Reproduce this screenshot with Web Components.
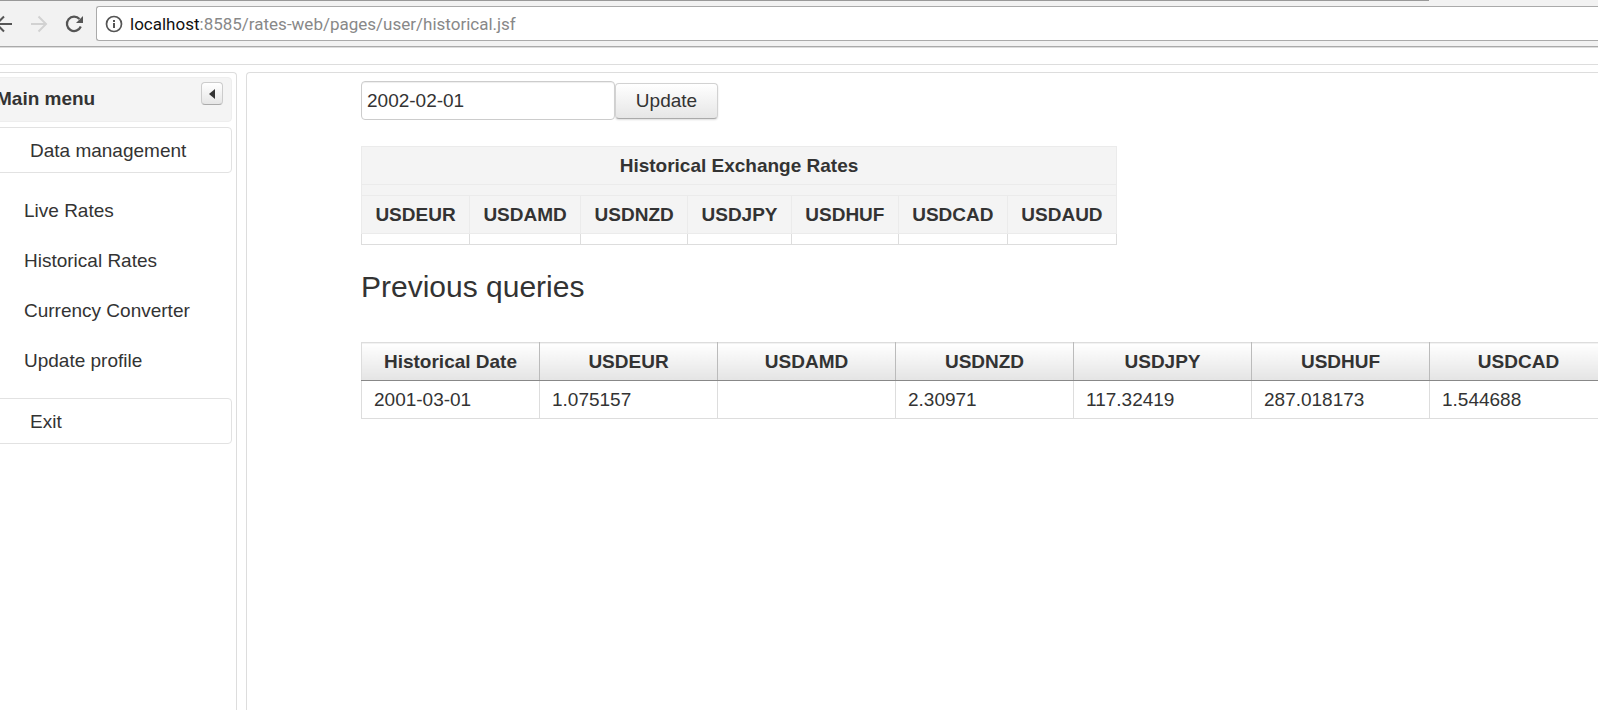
<!DOCTYPE html>
<html lang="en">
<head>
<meta charset="utf-8">
<title>Historical rates</title>
<style>
html, body { margin: 0; height: 100%; }
body { font: 19px/27px "Liberation Sans", Arial, sans-serif; color: #333; background: #fff; overflow: hidden; }
</style>
</head>
<body>
<rates-app>
  <browser-bar slot="bar" host="localhost" path=":8585/rates-web/pages/user/historical.jsf"></browser-bar>
  <side-menu slot="menu" heading="Main menu">
    <menu-group heading="Data management">
      <menu-link href="#live">Live Rates</menu-link>
      <menu-link href="#historical">Historical Rates</menu-link>
      <menu-link href="#converter">Currency Converter</menu-link>
      <menu-link href="#profile">Update profile</menu-link>
    </menu-group>
    <menu-group heading="Exit"></menu-group>
  </side-menu>
  <date-query value="2002-02-01"></date-query>
  <rates-table variant="plain" heading="Historical Exchange Rates"
    columns="USDEUR,USDAMD,USDNZD,USDJPY,USDHUF,USDCAD,USDAUD" values=",,,,,,"></rates-table>
  <section-title>Previous queries</section-title>
  <rates-table variant="wide"
    columns="Historical Date,USDEUR,USDAMD,USDNZD,USDJPY,USDHUF,USDCAD"
    values="2001-03-01,1.075157,,2.30971,117.32419,287.018173,1.544688"></rates-table>
</rates-app>
<script>
const component = (name, render) => customElements.define(name, class extends HTMLElement {
  constructor() {
    super();
    this.attachShadow({ mode: 'open' });
  }
  connectedCallback() {
    this.shadowRoot.innerHTML = '<style>*{box-sizing:border-box}</style>' + render(this);
  }
});
const attr = (el, key) => el.getAttribute(key) || '';

component('rates-app', () => `
<style>
:host { display: flex; flex-direction: column; height: 100vh; overflow: hidden; }
.gap { height: 17px; border-bottom: 1px solid #ddd; flex: none; }
.columns { display: grid; grid-template-columns: 257px minmax(0, 1fr); gap: 9px; flex: 1; min-height: 0; margin: 7px 0 0 -20px; }
main { border: 1px solid #ddd; border-width: 1px 0 0 1px; border-top-left-radius: 4px; padding: 8px 0 0 114px; overflow: hidden; }
</style>
<slot name="bar"></slot>
<div class="gap"></div>
<div class="columns"><slot name="menu"></slot><main><slot></slot></main></div>`);

component('browser-bar', el => `
<style>
:host { display: block; flex: none; background: #f2f2f2; border-bottom: 1px solid #ddd; }
.edge { height: 1px; background: linear-gradient(#999, #999) 0 0 / 1429px 1px no-repeat; }
nav { display: flex; align-items: center; padding: 5px 0; border-bottom: 1px solid #aaa; }
button { border: 0; padding: 0; background: none; height: 24px; flex: none; overflow: hidden; }
svg { display: block; }
.back { width: 31px; } .next { width: 30px; } .reload { width: 35px; }
.address { flex: 1; display: flex; align-items: center; gap: 7px; height: 35px; padding-left: 8px; background: #fff;
  border: 1px solid #aaa; border-right: 0; border-radius: 3px 0 0 3px;
  font: 17px/24px Roboto, sans-serif; color: #888; }
.host { color: #111; }
</style>
<div class="edge"></div>
<nav aria-label="Browser">
  <button class="back" aria-label="Back"><svg width="31" height="24" fill="none" stroke="#555" stroke-width="2"><path d="M-4 12H12M4 4.500L-3.500 12L4 19.500"/></svg></button>
  <button class="next" aria-label="Forward"><svg width="30" height="24" fill="none" stroke="#d2d2d2" stroke-width="2"><path d="M0 12H15M7.500 4.500L15 12L7.500 19.500"/></svg></button>
  <button class="reload" aria-label="Reload"><svg width="35" height="24"><path d="M18.500 7A7.200 7.200 0 1 0 19.800 14.500" fill="none" stroke="#555" stroke-width="2.200"/><path d="M22 4V11H15Z" fill="#555"/></svg></button>
  <div class="address">
    <svg width="18" height="18"><circle cx="9" cy="9" r="7.500" fill="none" stroke="#555" stroke-width="1.700"/><path d="M8 8h2v5h-2zM8 5h2v2h-2z" fill="#555"/></svg>
    <div role="textbox" aria-label="Address" contenteditable="true" spellcheck="false"><span class="host">${attr(el, 'host')}</span>${attr(el, 'path')}</div>
  </div>
</nav>`);

component('side-menu', el => `
<style>
:host { display: block; border: 1px solid #ddd; border-width: 1px 1px 0 1px; border-radius: 4px 4px 0 0; padding: 4px; }
header { display: flex; justify-content: space-between; align-items: flex-start; height: 45px; padding: 4px 8px 0 10px;
  background: #f4f4f4; border: 1px solid #eee; border-radius: 4px; }
h2 { margin: 0; padding-top: 3px; font-size: 19px; line-height: 27px; }
button { width: 22px; height: 23px; padding: 0; border: 1px solid #ccc; border-bottom-color: #aaa; border-radius: 4px;
  background: linear-gradient(#fff, #e6e6e6); display: grid; place-items: center; }
</style>
<header><h2>${attr(el, 'heading')}</h2>
<button aria-label="Collapse menu"><svg width="6" height="10"><path d="M6 0V10L0 5Z" fill="#333"/></svg></button></header>
<slot></slot>`);

component('menu-group', el => `
<style>
:host { display: block; margin-top: 5px; }
button { display: block; width: 100%; height: 46px; padding: 0 0 0 44px; text-align: left; font: inherit; color: inherit;
  background: #fff; border: 1px solid #e2e2e2; border-radius: 4px; }
.items { padding: 13px 0 7px 39px; }
</style>
<button>${attr(el, 'heading')}</button>
${el.children.length ? '<div class="items"><slot></slot></div>' : ''}`);

component('menu-link', el => `
<style>
:host { display: block; }
a { display: block; line-height: 50px; color: inherit; text-decoration: none; }
</style>
<a href="${attr(el, 'href')}"><slot></slot></a>`);

component('date-query', el => `
<style>
:host { display: block; }
form { display: flex; align-items: center; margin: 0; }
input, button { font: inherit; color: inherit; margin: 0; }
input { width: 254px; height: 39px; padding: 0 5px; border: 1px solid #ccc; border-radius: 4px; box-shadow: inset 0 1px 1px #eee; }
button { width: 103px; height: 36px; padding: 0; border: 1px solid #d2d2d2; border-bottom-color: #aaa; border-radius: 4px;
  background: linear-gradient(#fff, #e6e6e6); box-shadow: 0 1px 2px #ddd; }
</style>
<form><input type="text" aria-label="Date" value="${attr(el, 'value')}"><button type="button">Update</button></form>`);

component('section-title', () => `
<style>
:host { display: block; }
h2 { margin: 22px 0 35px; font-weight: 400; font-size: 30px; line-height: 40px; }
</style>
<h2><slot></slot></h2>`);

component('rates-table', el => {
  const columns = attr(el, 'columns').split(',');
  const values = attr(el, 'values').split(',');
  const heading = attr(el, 'heading');
  return `
<style>
:host { display: block; }
table { border-collapse: collapse; }
th, td { padding: 5px 13px; line-height: 27px; border: 1px solid #ddd; text-align: left; }
th { text-align: center; }
.plain { margin-top: 26px; width: 756px; }
.plain th { background: #f4f4f4; border-color: #ebebeb; }
.wide { table-layout: fixed; width: calc(178px * ${columns.length} + 1px); }
.wide th, .wide td { padding: 5px 12px; }
.wide th { background: linear-gradient(#fff, #e4e4e4); border-right-color: #bbb; border-bottom-color: #888; }
</style>
<table class="${attr(el, 'variant')}">
<thead>
${heading ? `<tr><th colspan="${columns.length}">${heading}</th></tr><tr><th colspan="${columns.length}"></th></tr>` : ''}
<tr>${columns.map(c => `<th scope="col">${c}</th>`).join('')}</tr>
</thead>
<tbody><tr>${values.map(v => `<td>${v}</td>`).join('')}</tr></tbody>
</table>`;
});
</script>
</body>
</html>
